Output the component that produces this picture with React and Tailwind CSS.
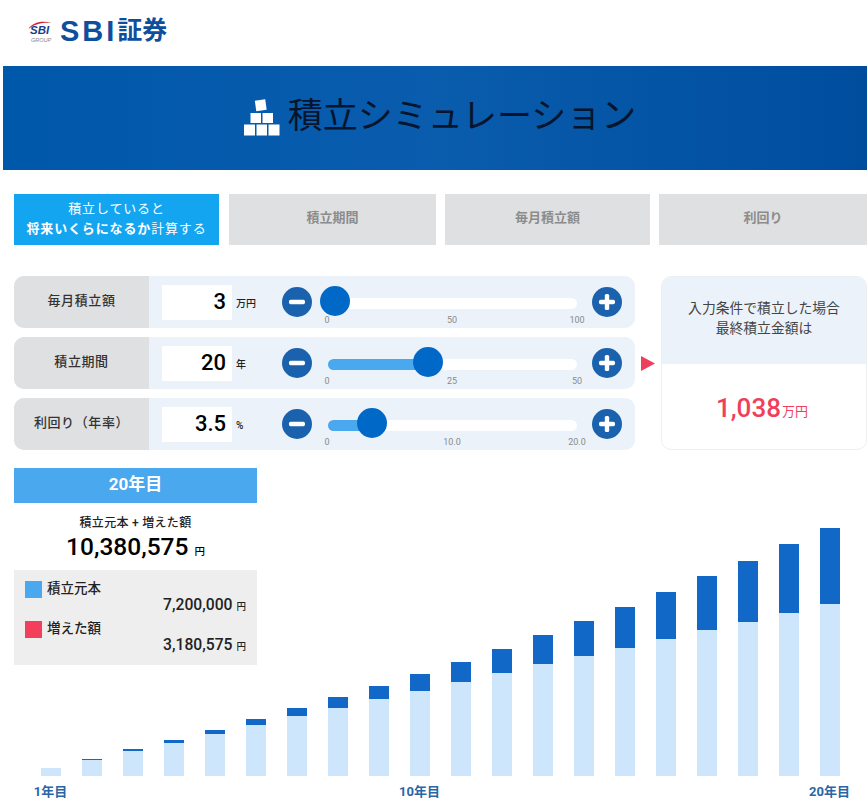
// App.jsx
const BARS = [
  [8, 0], [16, 1], [25, 2], [33, 3], [42, 4],
  [51, 6], [60, 8], [68, 11], [77, 13], [85, 17],
  [94, 20], [103, 24], [112, 29], [120, 35], [128, 41],
  [137, 47], [146, 54], [154, 61], [163, 69], [172, 76],
];

const AXIS_LABELS = { 0: '1年目', 9: '10年目', 19: '20年目' };

const SLIDERS = [
  { label: '毎月積立額', value: '3', unit: '万円', unitClass: 'text-[10px]', ratio: 0.03, ticks: ['0', '50', '100'] },
  { label: '積立期間', value: '20', unit: '年', unitClass: 'text-[10px]', ratio: 0.4, ticks: ['0', '25', '50'] },
  { label: '利回り（年率）', value: '3.5', unit: '%', unitClass: 'text-[10px]', ratio: 0.175, ticks: ['0', '10.0', '20.0'] },
];

const RoundButton = ({ plus }) => (
  <svg viewBox="0 0 30 30" className="w-[30px] h-[30px] shrink-0 mt-[-1px]">
    <circle cx="15" cy="15" r="15" fill="#1a62ad" />
    <rect x="7" y="12.8" width="16" height="4.4" rx="1.6" fill="#fff" />
    {plus && <rect x="12.8" y="7" width="4.4" height="16" rx="1.6" fill="#fff" />}
  </svg>
);

const SliderRow = ({ label, value, unit, unitClass, ratio, ticks }) => (
  <div className="flex items-center h-[52px] rounded-[10px] overflow-hidden bg-[#ebf2f9]">
    <div className="w-[135px] h-full flex items-center justify-center pb-[3px] bg-[#dfe0e2] text-[13px] font-medium text-[#333] tracking-[0.6px]">
      {label}
    </div>
    <div className="ml-[13px] mt-[1px] w-[70px] h-[35px] bg-white flex items-center justify-end pr-[6px] pb-[2px] text-[22px] font-medium text-black">
      {value}
    </div>
    <div className={`ml-[4px] w-[46px] pt-[2px] font-medium text-[#222] ${unitClass}`}>{unit}</div>
    <RoundButton />
    <div className="relative ml-[16px] mr-[15px] w-[249px] h-full">
      <div className="absolute top-[22px] left-0 right-0 h-[11px] rounded-full bg-white" />
      <div
        className="absolute top-[22px] left-0 h-[11px] rounded-l-full bg-[#4aa8ee]"
        style={{ width: `${ratio * 100}%` }}
      />
      <div
        className="absolute top-[10px] w-[30px] h-[30px] -translate-x-1/2 rounded-full bg-[#0068c6]"
        style={{ left: `${ratio * 100}%` }}
      />
      <div className="absolute top-[39px] -left-[17px] -right-[16px] flex justify-between text-[9px] leading-[11px] text-[#8a8a8a]">
        {ticks.map((tick) => (
          <span key={tick} className="w-[32px] text-center">{tick}</span>
        ))}
      </div>
    </div>
    <RoundButton plus />
  </div>
);

const App = () => {
  return (
    <div className="w-[867px] h-[808px] overflow-hidden bg-white font-['Roboto','Noto_Sans_CJK_JP',sans-serif]">
      <header className="h-[66px] pl-[28px] flex items-center gap-[7px]">
        <div className="relative w-[25px] h-[25px] mt-[-2px]">
          <svg viewBox="0 0 25 25" className="absolute top-0 left-0 w-[25px] h-[25px]">
            <path d="M0.5 9 C4 2.5 14 0 24 3 C16 2.2 7 3.5 0.5 9 Z" fill="#d8232f" />
          </svg>
          <span className="absolute top-[4px] left-[2px] text-[11.5px] leading-[13px] font-bold italic text-[#17408b] font-['Liberation_Sans',sans-serif]">SBI</span>
          <span className="absolute top-[17px] left-[3px] text-[5.5px] leading-[7px] italic text-[#888] font-['Liberation_Sans',sans-serif]">GROUP</span>
        </div>
        <div className="flex items-center text-[#0e4f9c] font-bold mt-[-4px]">
          <span className="text-[29px] leading-[30px] tracking-[3px] font-['Liberation_Sans',sans-serif]">SBI</span>
          <span className="text-[25px] leading-[30px]">証券</span>
        </div>
      </header>

      <div className="ml-[3px] h-[104px] pl-[10px] flex items-center justify-center gap-[8px] bg-gradient-to-r from-[#0058ab] via-[#0a5cad] to-[#004d9e]">
        <svg viewBox="0 0 36 37" className="w-[36px] h-[37px] mt-[-1px]">
          <rect x="11.5" y="1" width="10.5" height="10.5" fill="#fff" transform="rotate(-8 16.7 6.2)" />
          <rect x="6.5" y="14" width="10.5" height="10" fill="#fff" />
          <rect x="18.5" y="14" width="10.5" height="10" fill="#fff" />
          <rect x="0" y="25.5" width="11" height="11" fill="#fff" />
          <rect x="12.5" y="25.5" width="10.5" height="11" fill="#fff" />
          <rect x="24.5" y="25.5" width="11" height="11" fill="#fff" />
        </svg>
        <h1 className="text-[35px] leading-[50px] font-normal text-[#06152e] mt-[-3px]">積立シミュレーション</h1>
      </div>

      <nav className="mt-[24px] ml-[14px] flex gap-[9px] h-[51px]">
        <div className="w-[205px] mr-[1px] flex flex-col items-center justify-center pb-[1px] bg-[#14a5f1] text-white text-[13px] leading-[20px] tracking-[0.85px]">
          <span>積立していると</span>
          <span><b className="font-bold">将来いくらになるか</b>計算する</span>
        </div>
        {['積立期間', '毎月積立額', '利回り'].map((tab, i) => (
          <div
            key={tab}
            className={`flex items-center justify-center pb-[3px] bg-[#dfe0e2] text-[13px] font-bold text-[#8c8c8c] ${i === 0 ? 'w-[207px]' : i === 1 ? 'w-[205px]' : 'w-[208px]'}`}
          >
            {tab}
          </div>
        ))}
      </nav>

      <div className="mt-[31px] ml-[14px] flex items-start">
        <div className="w-[621px] flex flex-col gap-[9px]">
          {SLIDERS.map((row) => (
            <SliderRow key={row.label} {...row} />
          ))}
        </div>
        <div className="w-[26px] h-[174px] flex items-center justify-end pr-[6px]">
          <svg viewBox="0 0 14 15" className="w-[14px] h-[15px] mt-[1px]">
            <path d="M0 0 L14 7.5 L0 15 Z" fill="#ee3f5c" />
          </svg>
        </div>
        <div className="w-[206px] h-[174px] rounded-[10px] overflow-hidden border border-[#edf0f3]">
          <div className="h-[87px] bg-[#ebf2f9] flex items-center justify-center pb-[5px] text-center text-[13.8px] leading-[20px] text-[#444]">
            <p>入力条件で積立した場合<br />最終積立金額は</p>
          </div>
          <div className="h-[86px] flex items-center justify-center text-[#ee3f5c] pt-[3px] pr-[4px]">
            <span className="text-[26px] font-medium">1,038</span>
            <span className="text-[13px] pt-[7px] ml-[1px]">万円</span>
          </div>
        </div>
      </div>

      <div className="mt-[18px] grid h-[340px]">
        <div className="[grid-area:1/1] self-end ml-[30px] flex">
          {BARS.map(([light, dark], i) => (
            <div key={i} className="w-[41px] flex flex-col items-center justify-end">
              <div className="w-[20px] bg-[#1268c6]" style={{ height: dark }} />
              <div className="w-[20px] bg-[#cde6fc]" style={{ height: light }} />
              <div className="h-[32px] pt-[7px] flex justify-center whitespace-nowrap text-[13px] leading-[18px] font-bold text-[#2a66a6]">
                {AXIS_LABELS[i]}
              </div>
            </div>
          ))}
        </div>

        <div className="[grid-area:1/1] self-start ml-[14px] w-[243px] h-[197px] flex flex-col">
          <div className="h-[35px] flex items-center justify-center pb-[1px] bg-[#4aa8ee] text-white text-[17px] font-bold">20年目</div>
          <div className="h-[67px] bg-white flex flex-col items-center pt-[12px]">
            <div className="text-[12px] leading-[16px] font-medium text-[#222] tracking-[0.3px]">積立元本 + 増えた額</div>
            <div className="leading-[32px] font-medium text-black">
              <span className="text-[24.5px]">10,380,575</span>
              <span className="text-[10.5px] ml-[6px]">円</span>
            </div>
          </div>
          <div className="flex-1 bg-[#eeeeee] pt-[11px] pl-[11px] pr-[11px]">
            {[
              { name: '積立元本', color: 'bg-[#4aa8ee]', amount: '7,200,000' },
              { name: '増えた額', color: 'bg-[#f43f5c]', amount: '3,180,575' },
            ].map((item) => (
              <div key={item.name} className="h-[40px]">
                <div className="flex items-center gap-[5px] h-[17px]">
                  <span className={`w-[17px] h-[17px] ${item.color}`} />
                  <span className="text-[13.5px] font-medium text-[#222] mt-[-2px]">{item.name}</span>
                </div>
                <div className="text-right leading-[20px] mt-[-3px] font-medium text-[#222]">
                  <span className="text-[15.7px]">{item.amount}</span>
                  <span className="text-[9.5px] ml-[4px]">円</span>
                </div>
              </div>
            ))}
          </div>
        </div>
      </div>
    </div>
  );
};

export default App;
